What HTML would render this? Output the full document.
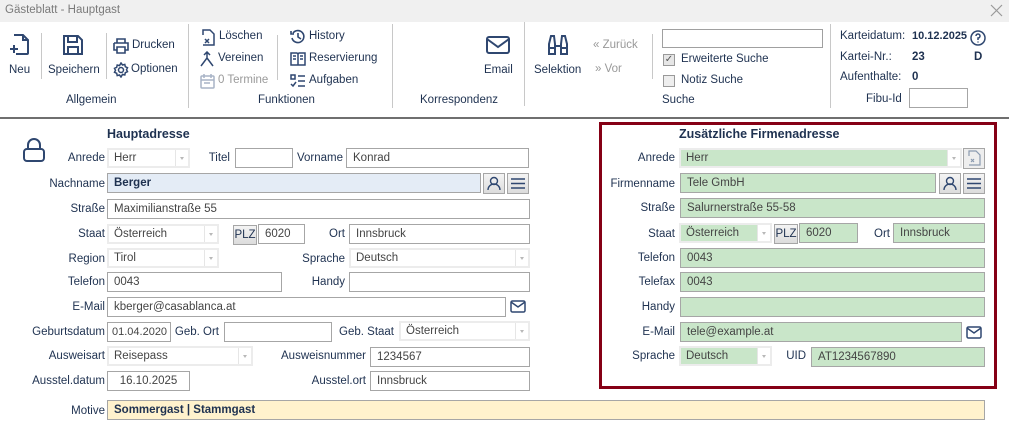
<!DOCTYPE html>
<html><head><meta charset="utf-8">
<style>
*{margin:0;padding:0;box-sizing:border-box}
body{width:1009px;height:427px;background:#fff;font-family:"Liberation Sans",sans-serif;font-size:11.5px;color:#1e3150;position:relative;overflow:hidden}
.a{position:absolute;white-space:nowrap}
.l{position:absolute;white-space:nowrap;text-align:right;line-height:20px}
.f{position:absolute;border:1px solid #a6a6a6;height:20px;padding-left:6px;line-height:18px;color:#444;background:#fff;white-space:nowrap;overflow:hidden}
.c{position:absolute;border:2px solid #ececec;height:20px;padding-left:5px;line-height:16px;color:#444;background:#fff;white-space:nowrap}
.c:after{content:"";position:absolute;right:0;top:0;bottom:0;width:12px;border-left:1px solid #e6e6e6;background:#fff}
.c:before{content:"";position:absolute;right:4px;top:7px;border:2px solid transparent;border-top:3px solid #b8b8b8;z-index:2}
.g{background:#c9e6c9}
.b{position:absolute;border:1px solid #a6a6a6;background:linear-gradient(#f4f4f4,#dcdcdc);height:21px}
.sep{position:absolute;width:1px;background:#c8c8c8}
svg{position:absolute}
</style></head><body>
<div class="a" style="left:0;top:0;width:1009px;height:22px;background:#f0f0f0"></div>
<div class="a" style="left:5px;top:4px;color:#7a7a7a">Gästeblatt - Hauptgast</div>
<svg style="left:990px;top:4px" width="13" height="13"><path d="M1 1L12 12M12 1L1 12" stroke="#999" stroke-width="1.2"/></svg>

<!-- ribbon -->
<svg style="left:10px;top:34px" width="22" height="22" fill="none" stroke="#2f4770" stroke-width="2"><path d="M4 1h9l5 5v13a1 1 0 0 1-1 1H6M13 1v5h5M4 11v8M0 15h8"/></svg>
<div class="a" style="left:9px;top:64px">Neu</div>
<div class="sep" style="left:41px;top:33px;height:46px"></div>
<svg style="left:62px;top:34px" width="22" height="22" fill="none" stroke="#2f4770" stroke-width="2"><path d="M2 2h14l4 4v14H2zM6 2v6h9V2M6 20v-7h10v7"/></svg>
<div class="a" style="left:48px;top:64px">Speichern</div>
<div class="sep" style="left:106px;top:33px;height:46px"></div>
<svg style="left:113px;top:38px" width="16" height="16" fill="none" stroke="#2f4770" stroke-width="1.6"><path d="M4 5V1h8v4M1 5h14v7h-3M4 12H1V5M4 9h8v6H4z"/></svg>
<div class="a" style="left:132px;top:39px">Drucken</div>
<svg style="left:113px;top:62px" width="16" height="16" fill="none" stroke="#2f4770" stroke-width="1.5"><circle cx="8" cy="8" r="2.5"/><path d="M8 1l1.5 2 2.3-.6.5 2.3 2.2 1-1 2 1 2-2.2 1-.5 2.3-2.3-.6L8 15l-1.5-2-2.3.6-.5-2.3-2.2-1 1-2-1-2 2.2-1 .5-2.3 2.3.6z"/></svg>
<div class="a" style="left:131px;top:63px">Optionen</div>
<div class="a" style="left:66px;top:94px">Allgemein</div>
<div class="sep" style="left:188px;top:24px;height:84px"></div>

<svg style="left:200px;top:29px" width="15" height="17" fill="none" stroke="#2f4770" stroke-width="1.5"><path d="M3 6V1h7l4 4v11H3M5 10l4 4M9 10l-4 4"/></svg>
<div class="a" style="left:219px;top:30px">Löschen</div>
<svg style="left:200px;top:51px" width="15" height="16" fill="none" stroke="#2f4770" stroke-width="1.5"><path d="M7 1v6L1 15M7 7l6 8M4 4l3-3 3 3"/></svg>
<div class="a" style="left:218px;top:52px">Vereinen</div>
<svg style="left:200px;top:73px" width="15" height="16" fill="none" stroke="#a8b4c6" stroke-width="1.5"><rect x="1" y="3" width="13" height="12" rx="1"/><path d="M4 1v4M11 1v4M1 7h13M4 10h6"/></svg>
<div class="a" style="left:218px;top:74px;color:#9a9a9a">0 Termine</div>
<div class="sep" style="left:277px;top:35px;height:45px"></div>
<svg style="left:290px;top:29px" width="16" height="16" fill="none" stroke="#2f4770" stroke-width="1.6"><path d="M3 4a6 6 0 1 1-1 5M1 2v3h3M8 4v4l3 2"/></svg>
<div class="a" style="left:309px;top:30px">History</div>
<svg style="left:290px;top:52px" width="16" height="14" fill="none" stroke="#2f4770" stroke-width="1.5"><path d="M1 1h6l1 1 1-1h6v12H1zM8 2v11M3 4h3M3 7h3M10 4h3M10 7h3"/></svg>
<div class="a" style="left:309px;top:52px">Reservierung</div>
<svg style="left:290px;top:74px" width="16" height="15" fill="none" stroke="#2f4770" stroke-width="1.5"><path d="M1 1h4v4H1zM8 2h7M8 7h7M8 12h7M1 10l2 2 3-4"/></svg>
<div class="a" style="left:309px;top:74px">Aufgaben</div>
<div class="a" style="left:258px;top:94px">Funktionen</div>
<div class="sep" style="left:392px;top:24px;height:84px"></div>

<svg style="left:486px;top:36px" width="24" height="18" fill="none" stroke="#2f4770" stroke-width="2"><rect x="1" y="1" width="22" height="16" rx="2"/><path d="M1 3l11 8 11-8"/></svg>
<div class="a" style="left:484px;top:64px">Email</div>
<div class="a" style="left:420px;top:94px">Korrespondenz</div>
<div class="sep" style="left:524px;top:22px;height:84px"></div>

<svg style="left:546px;top:34px" width="24" height="22" fill="none" stroke="#2f4770" stroke-width="2"><path d="M3 20V10l2-8h3l1 8v10zM15 20V10l1-8h3l2 8v10zM9 12h6M3 14h6M15 14h6"/></svg>
<div class="a" style="left:534px;top:64px">Selektion</div>
<div class="a" style="left:593px;top:39px;color:#999">« Zurück</div>
<div class="a" style="left:595px;top:63px;color:#999">» Vor</div>
<div class="sep" style="left:652px;top:34px;height:45px"></div>
<div class="a" style="left:662px;top:29px;width:161px;height:19px;border:1px solid #a0a0a0"></div>
<div class="a" style="left:663px;top:54px;width:12px;height:12px;border:1px solid #999;background:#e6e6e6;font-size:10px;line-height:10px;text-align:center;color:#555">✓</div>
<div class="a" style="left:681px;top:53px">Erweiterte Suche</div>
<div class="a" style="left:663px;top:75px;width:12px;height:12px;border:1px solid #999;background:#eee"></div>
<div class="a" style="left:681px;top:74px">Notiz Suche</div>
<div class="a" style="left:662px;top:94px">Suche</div>
<div class="sep" style="left:830px;top:24px;height:84px"></div>

<div class="a" style="left:840px;top:30px">Karteidatum:</div>
<div class="a" style="left:912px;top:30px;font-weight:bold;font-size:11px">10.12.2025</div>
<svg style="left:970px;top:30px" width="16" height="16" fill="none" stroke="#2f4770" stroke-width="1.5"><circle cx="8" cy="8" r="7"/><path d="M6 6a2 2 0 1 1 2 2v2M8 11.5v1"/></svg>
<div class="a" style="left:840px;top:51px">Kartei-Nr.:</div>
<div class="a" style="left:912px;top:51px;font-weight:bold">23</div>
<div class="a" style="left:974px;top:51px;font-weight:bold">D</div>
<div class="a" style="left:840px;top:71px">Aufenthalte:</div>
<div class="a" style="left:912px;top:71px;font-weight:bold">0</div>
<div class="a" style="left:866px;top:93px">Fibu-Id</div>
<div class="a" style="left:909px;top:88px;width:59px;height:20px;border:1px solid #a6a6a6"></div>

<div class="a" style="left:0;top:117px;width:1009px;height:2px;background:#6f6f6f"></div>

<!-- left form -->
<svg style="left:23px;top:138px" width="22" height="25" fill="none" stroke="#2f4770" stroke-width="2"><path d="M5 11V7a6 6 0 0 1 12 0v4"/><rect x="1" y="11" width="20" height="12" rx="3"/></svg>
<div class="a" style="left:107px;top:127px;font-weight:bold;font-size:12.5px">Hauptadresse</div>

<div class="l" style="right:904px;top:148px">Anrede</div>
<div class="c" style="left:107px;top:148px;width:83px">Herr</div>
<div class="l" style="right:779px;top:148px">Titel</div>
<div class="f" style="left:235px;top:148px;width:58px"></div>
<div class="l" style="right:666px;top:148px">Vorname</div>
<div class="f" style="left:346px;top:148px;width:183px">Konrad</div>

<div class="l" style="right:904px;top:174px">Nachname</div>
<div class="f" style="left:107px;top:173px;width:374px;background:#e4ecf6;font-weight:bold;color:#1e3150">Berger</div>
<div class="b" style="left:483px;top:173px;width:22px"></div>
<svg style="left:487px;top:176px" width="14" height="15" fill="none" stroke="#2f4770" stroke-width="1.4"><circle cx="7" cy="5" r="3.5"/><path d="M1 14a6 6 0 0 1 12 0"/></svg>
<div class="b" style="left:507px;top:173px;width:22px"></div>
<svg style="left:510px;top:177px" width="16" height="13" stroke="#2f4770" stroke-width="1.4"><path d="M1 2h14M1 6.5h14M1 11h14"/></svg>

<div class="l" style="right:904px;top:199px">Straße</div>
<div class="f" style="left:107px;top:199px;width:423px">Maximilianstraße 55</div>

<div class="l" style="right:904px;top:224px">Staat</div>
<div class="c" style="left:107px;top:224px;width:112px">Österreich</div>
<div class="b" style="left:233px;top:225px;width:24px;height:20px;text-align:center;line-height:18px">PLZ</div>
<div class="f" style="left:258px;top:224px;width:47px">6020</div>
<div class="l" style="right:664px;top:224px">Ort</div>
<div class="f" style="left:349px;top:224px;width:181px">Innsbruck</div>

<div class="l" style="right:904px;top:249px">Region</div>
<div class="c" style="left:107px;top:248px;width:112px">Tirol</div>
<div class="l" style="right:664px;top:249px">Sprache</div>
<div class="c" style="left:349px;top:248px;width:181px">Deutsch</div>

<div class="l" style="right:904px;top:272px">Telefon</div>
<div class="f" style="left:107px;top:272px;width:175px">0043</div>
<div class="l" style="right:664px;top:272px">Handy</div>
<div class="f" style="left:349px;top:272px;width:181px"></div>

<div class="l" style="right:904px;top:297px">E-Mail</div>
<div class="f" style="left:107px;top:297px;width:399px">kberger@casablanca.at</div>
<svg style="left:510px;top:300px" width="16" height="13" fill="none" stroke="#2f4770" stroke-width="1.5"><rect x="1" y="1" width="14" height="11" rx="1.5"/><path d="M1 2l7 5 7-5"/></svg>

<div class="l" style="right:904px;top:322px">Geburtsdatum</div>
<div class="f" style="left:107px;top:322px;width:64px;padding-left:4px;font-size:11px">01.04.2020</div>
<div class="l" style="right:790px;top:322px">Geb. Ort</div>
<div class="f" style="left:224px;top:322px;width:108px"></div>
<div class="l" style="right:615px;top:322px">Geb. Staat</div>
<div class="c" style="left:399px;top:321px;width:131px">Österreich</div>

<div class="l" style="right:904px;top:346px">Ausweisart</div>
<div class="c" style="left:107px;top:346px;width:146px">Reisepass</div>
<div class="l" style="right:643px;top:346px">Ausweisnummer</div>
<div class="f" style="left:370px;top:347px;width:160px">1234567</div>

<div class="l" style="right:904px;top:371px">Ausstel.datum</div>
<div class="f" style="left:107px;top:371px;width:83px;text-align:center;padding:0">16.10.2025</div>
<div class="l" style="right:643px;top:371px">Ausstel.ort</div>
<div class="f" style="left:370px;top:371px;width:160px">Innsbruck</div>

<div class="l" style="right:904px;top:401px">Motive</div>
<div class="f" style="left:107px;top:400px;width:878px;background:#fff2cd;font-weight:bold;color:#1e3150">Sommergast | Stammgast</div>

<!-- right box -->
<div class="a" style="left:599px;top:122px;width:398px;height:267px;border:3px solid #850015"></div>
<div class="a" style="left:679px;top:127px;font-weight:bold;font-size:12.5px">Zusätzliche Firmenadresse</div>
<div class="l" style="right:334px;top:148px">Anrede</div>
<div class="c g" style="left:679px;top:148px;width:283px">Herr</div>
<div class="b" style="left:963px;top:148px;width:22px;background:#eee"></div>
<svg style="left:967px;top:150px" width="14" height="16" fill="none" stroke="#8a9ab0" stroke-width="1.2"><path d="M2 6V1h7l4 4v10H2M4 9l3 3M7 9l-3 3"/></svg>
<div class="l" style="right:334px;top:174px">Firmenname</div>
<div class="f g" style="left:680px;top:173px;width:256px">Tele GmbH</div>
<div class="b" style="left:939px;top:173px;width:22px"></div>
<svg style="left:943px;top:176px" width="14" height="15" fill="none" stroke="#2f4770" stroke-width="1.4"><circle cx="7" cy="5" r="3.5"/><path d="M1 14a6 6 0 0 1 12 0"/></svg>
<div class="b" style="left:963px;top:173px;width:22px"></div>
<svg style="left:966px;top:177px" width="16" height="13" stroke="#2f4770" stroke-width="1.4"><path d="M1 2h14M1 6.5h14M1 11h14"/></svg>
<div class="l" style="right:334px;top:198px">Straße</div>
<div class="f g" style="left:680px;top:198px;width:305px">Salurnerstraße 55-58</div>
<div class="l" style="right:334px;top:224px">Staat</div>
<div class="c g" style="left:679px;top:223px;width:93px">Österreich</div>
<div class="b" style="left:774px;top:224px;width:24px;height:20px;text-align:center;line-height:18px">PLZ</div>
<div class="f g" style="left:799px;top:223px;width:59px">6020</div>
<div class="l" style="right:119px;top:224px">Ort</div>
<div class="f g" style="left:893px;top:223px;width:92px">Innsbruck</div>
<div class="l" style="right:334px;top:248px">Telefon</div>
<div class="f g" style="left:680px;top:248px;width:305px">0043</div>
<div class="l" style="right:334px;top:272px">Telefax</div>
<div class="f g" style="left:680px;top:272px;width:305px">0043</div>
<div class="l" style="right:334px;top:297px">Handy</div>
<div class="f g" style="left:680px;top:297px;width:305px"></div>
<div class="l" style="right:334px;top:322px">E-Mail</div>
<div class="f g" style="left:680px;top:322px;width:282px">tele@example.at</div>
<svg style="left:966px;top:326px" width="16" height="13" fill="none" stroke="#2f4770" stroke-width="1.5"><rect x="1" y="1" width="14" height="11" rx="1.5"/><path d="M1 2l7 5 7-5"/></svg>
<div class="l" style="right:334px;top:346px">Sprache</div>
<div class="c g" style="left:679px;top:346px;width:93px">Deutsch</div>
<div class="l" style="right:203px;top:346px">UID</div>
<div class="f g" style="left:811px;top:347px;width:174px">AT1234567890</div>
</body></html>
